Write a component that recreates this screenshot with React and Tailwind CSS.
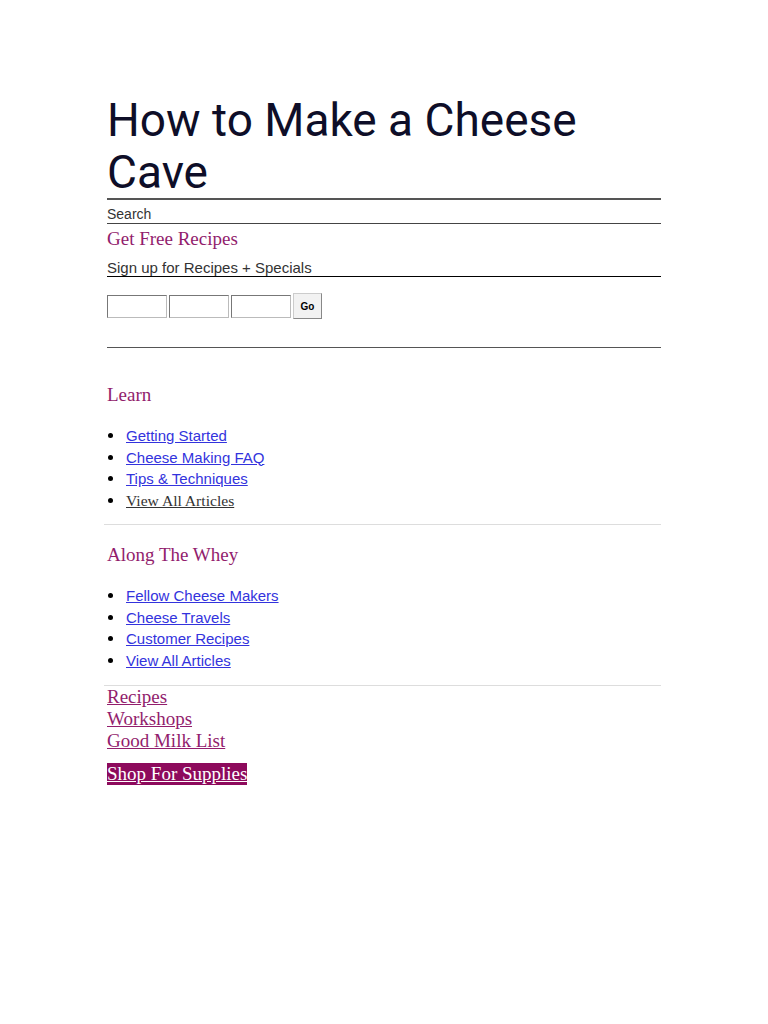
const sans = { fontFamily: '"Liberation Sans", Arial, sans-serif' };

function LinkList({ items }) {
  return (
    <ul className="mt-[19px] text-[15px] leading-[21.5px] [font-family:'Liberation_Sans',Arial,sans-serif]">
      {items.map((item) => (
        <li key={item.label} className="flex items-center">
          <span className="flex w-[19px] shrink-0 items-center">
            <span className="ml-[1px] h-[5px] w-[5px] rounded-full bg-black" />
          </span>
          <a
            href="#"
            className={
              item.serif
                ? "text-[15.6px] text-[#333] underline [font-family:'Liberation_Serif',serif]"
                : 'text-[#3333dd] underline'
            }
          >
            {item.label}
          </a>
        </li>
      ))}
    </ul>
  );
}

function SectionTitle({ children, className = '' }) {
  return (
    <h3 className={`text-[19px] leading-[22px] text-[#921d6d] [font-family:'Liberation_Serif',serif] ${className}`}>
      {children}
    </h3>
  );
}

function Field() {
  return <input className="h-[23px] w-[60px] border border-[#bbb] border-t-[#777] border-l-[#777] bg-white" />;
}

export default function App() {
  return (
    <div className="min-h-[1024px] bg-white">
      <div className="ml-[107px] w-[554px] pt-[94px]">
        <h1 className="text-[46px] leading-[52px] text-[#0e0e28] [font-family:Roboto,Arial,sans-serif]">
          How to Make a Cheese Cave
        </h1>
        <div className="border-t-2 border-[#555]" />
        <div className="pt-[5px] text-[14px] leading-[18px] text-[#333] [font-family:'Liberation_Sans',Arial,sans-serif]">Search</div>
        <div className="border-t-[1.5px] border-[#444]" />
        <SectionTitle className="mt-[4px]">Get Free Recipes</SectionTitle>
        <div className="mt-[10px] border-b border-black text-[15px] leading-[16px] text-[#333]" style={sans}>
          Sign up for Recipes + Specials
        </div>
        <div className="mt-[16px] flex items-center gap-[2px]">
          <Field />
          <Field />
          <Field />
          <button className="h-[26px] w-[29px] border border-[#ccc] border-r-[#888] border-b-[#888] bg-[#f2f2f2] text-[10px] font-bold text-black" style={sans}>
            Go
          </button>
        </div>
        <div className="mt-[28px] border-t border-[#555]" />

        <SectionTitle className="mt-[36px]">Learn</SectionTitle>
        <LinkList
          items={[
            { label: 'Getting Started' },
            { label: 'Cheese Making FAQ' },
            { label: 'Tips & Techniques' },
            { label: 'View All Articles', serif: true },
          ]}
        />
        <div className="-ml-[3px] mt-[13px] border-t border-[#ddd]" />

        <SectionTitle className="mt-[19px]">Along The Whey</SectionTitle>
        <LinkList
          items={[
            { label: 'Fellow Cheese Makers' },
            { label: 'Cheese Travels' },
            { label: 'Customer Recipes' },
            { label: 'View All Articles' },
          ]}
        />
        <div className="-ml-[3px] mt-[14px] border-t border-[#ddd]" />

        <div className="flex flex-col text-[19px] leading-[22px] [font-family:'Liberation_Serif',serif]">
          <a href="#" className="self-start text-[#921d6d] underline">Recipes</a>
          <a href="#" className="self-start text-[#921d6d] underline">Workshops</a>
          <a href="#" className="self-start text-[#921d6d] underline">Good Milk List</a>
          <a href="#" className="mt-[11px] self-start bg-[#8d0a5c] text-white underline">Shop For Supplies</a>
        </div>
      </div>
    </div>
  );
}
